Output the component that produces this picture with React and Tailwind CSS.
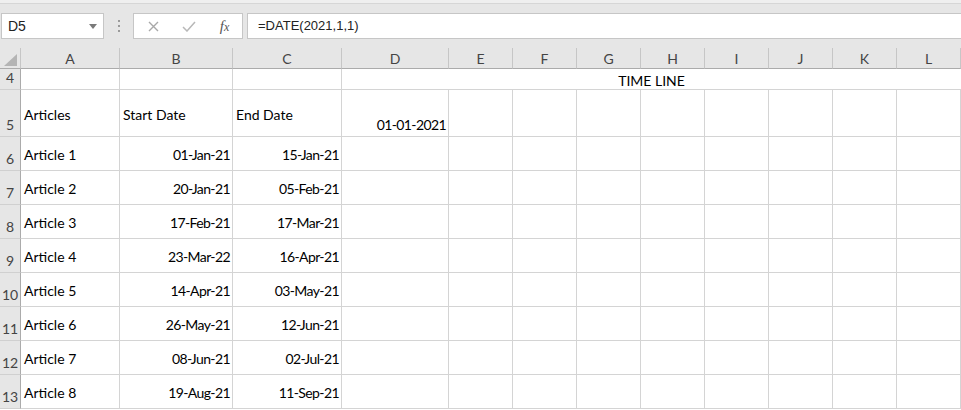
import React from "react";

const cols = ["A", "B", "C", "D", "E", "F", "G", "H", "I", "J", "K", "L"];

const rows = [
  { n: 6, a: "Article 1", b: "01-Jan-21", c: "15-Jan-21" },
  { n: 7, a: "Article 2", b: "20-Jan-21", c: "05-Feb-21" },
  { n: 8, a: "Article 3", b: "17-Feb-21", c: "17-Mar-21" },
  { n: 9, a: "Article 4", b: "23-Mar-22", c: "16-Apr-21" },
  { n: 10, a: "Article 5", b: "14-Apr-21", c: "03-May-21" },
  { n: 11, a: "Article 6", b: "26-May-21", c: "12-Jun-21" },
  { n: 12, a: "Article 7", b: "08-Jun-21", c: "02-Jul-21" },
  { n: 13, a: "Article 8", b: "19-Aug-21", c: "11-Sep-21" },
];

const cellFont = { fontFamily: "Lato, 'Liberation Sans', sans-serif" };

const RowHead = ({ n }) => (
  <div className="flex items-end justify-center pb-[1px] bg-[#e6e6e6] border-r border-b border-r-[#ababab] border-b-[#d0d0d0] text-[14px] text-[#444]">
    {n}
  </div>
);

const Cell = ({ children, right, bottom, className = "" }) => (
  <div
    className={`flex ${bottom ? "items-end pb-[1px]" : "items-center pt-[2px]"} ${
      right ? "justify-end pr-[2px] tracking-[-0.6px]" : "pl-[3px]"
    } border-r border-b border-[#d4d4d4] text-[14px] text-black whitespace-nowrap ${className}`}
  >
    {children}
  </div>
);

const FormulaBar = () => (
  <div className="h-[48px] bg-[#e6e6e6]" style={{ fontFamily: "'Liberation Sans', Arial, sans-serif" }}>
    <div className="h-[4px] bg-[#efefef] border-b border-[#d6d6d6]" />
    <div className="flex items-center pt-[9px]">
      <div className="ml-[1px] w-[103px] h-[26px] bg-white border border-[#c6c6c6] flex items-center justify-between pl-[6px] pr-[6px]">
        <span className="text-[14px] text-[#222]">D5</span>
        <svg width="8" height="5" viewBox="0 0 8 5">
          <path d="M0 0 L8 0 L4 5 Z" fill="#7a7a7a" />
        </svg>
      </div>
      <div className="w-[29px] flex flex-col items-center gap-[3px]">
        <span className="w-[2px] h-[2px] bg-[#9a9a9a]" />
        <span className="w-[2px] h-[2px] bg-[#9a9a9a]" />
        <span className="w-[2px] h-[2px] bg-[#9a9a9a]" />
      </div>
      <div className="w-[110px] h-[26px] bg-white border border-[#c6c6c6] flex items-center">
        <div className="w-[37px] flex justify-center pl-[2px]">
          <svg width="11" height="11" viewBox="0 0 11 11">
            <path d="M1 1 L10 10 M10 1 L1 10" stroke="#a8a8a8" strokeWidth="1.4" />
          </svg>
        </div>
        <div className="w-[36px] flex justify-center">
          <svg width="14" height="11" viewBox="0 0 14 11">
            <path d="M1 6 L5 10 L13 1" stroke="#b8b8b8" strokeWidth="1.5" fill="none" />
          </svg>
        </div>
        <div className="w-[35px] flex justify-center">
          <span className="italic text-[15px] text-[#555]" style={{ fontFamily: "'Liberation Serif', serif" }}>
            f<span className="text-[12px]">x</span>
          </span>
        </div>
      </div>
      <div className="ml-[4px] flex-1 h-[26px] bg-white border border-r-0 border-[#c6c6c6] flex items-center pl-[10px]">
        <span className="text-[13px] text-[#222]">=DATE(2021,1,1)</span>
      </div>
    </div>
  </div>
);

export default function App() {
  return (
    <div className="w-[961px] h-[410px] overflow-hidden bg-white">
      <FormulaBar />
      <div
        className="grid grid-cols-[21px_99px_113px_109px_107px_repeat(8,64px)] grid-rows-[21px_21px_47px_repeat(8,34px)]"
        style={cellFont}
      >
        <div className="relative bg-[#e6e6e6] border-r border-b border-r-[#c6c6c6] border-b-[#ababab]">
          <svg className="absolute right-[3px] bottom-[2px]" width="13" height="12" viewBox="0 0 13 12">
            <path d="M13 0 L13 12 L0 12 Z" fill="#b4b4b4" />
          </svg>
        </div>
        {cols.map((c) => (
          <div
            key={c}
            className="flex items-center justify-center pt-[1px] bg-[#e6e6e6] border-r border-b border-r-[#c6c6c6] border-b-[#ababab] text-[14px] text-[#444]"
          >
            {c}
          </div>
        ))}

        <RowHead n={4} />
        <Cell />
        <Cell />
        <Cell />
        <div className="col-span-9 flex items-center justify-center pt-[2px] border-b border-[#d4d4d4] text-[14px] text-black">
          TIME LINE
        </div>

        <RowHead n={5} />
        <Cell>Articles</Cell>
        <Cell>Start Date</Cell>
        <Cell>End Date</Cell>
        <Cell right bottom>
          01-01-2021
        </Cell>
        {cols.slice(4).map((c) => (
          <Cell key={c} />
        ))}

        {rows.map((r) => (
          <React.Fragment key={r.n}>
            <RowHead n={r.n} />
            <Cell>{r.a}</Cell>
            <Cell right>{r.b}</Cell>
            <Cell right>{r.c}</Cell>
            {cols.slice(3).map((c) => (
              <Cell key={c} />
            ))}
          </React.Fragment>
        ))}
      </div>
    </div>
  );
}
